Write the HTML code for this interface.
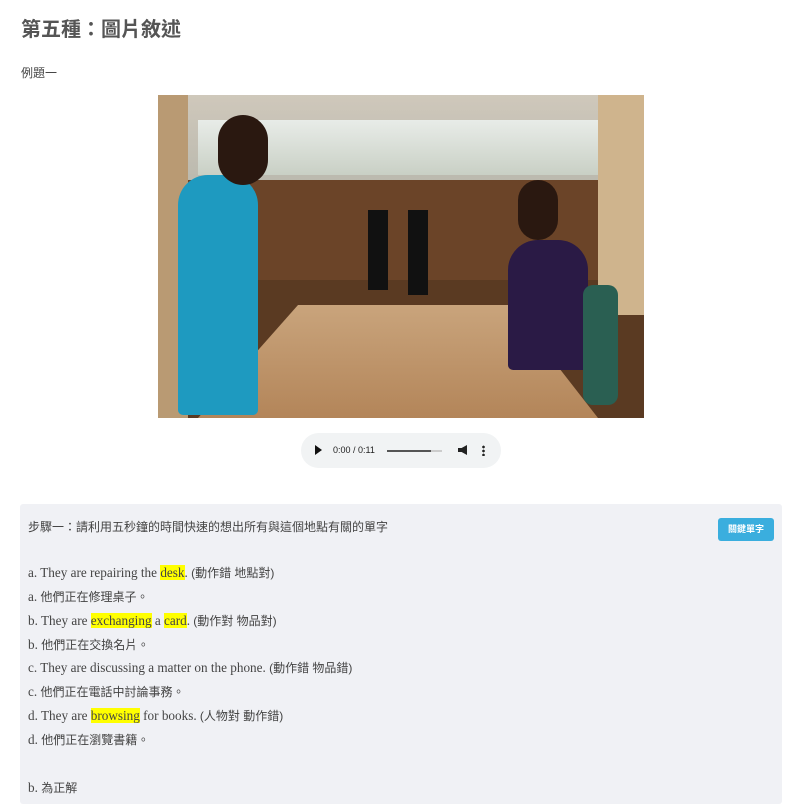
<!DOCTYPE html>
<html><head><meta charset="utf-8"><style>
body{margin:0;background:#fff;font-family:"Liberation Sans","Noto Sans CJK TC",sans-serif;color:#444;width:802px;height:797px;overflow:hidden;position:relative}
h1{position:absolute;left:21px;top:13px;margin:0;font-size:20px;font-weight:bold;color:#555}
.ex{position:absolute;left:21px;top:64px;font-size:12px}
.photo{position:absolute;left:158px;top:95px;width:486px;height:323px;overflow:hidden;background:#5a3a22}
.audio{position:absolute;left:301px;top:433px;width:200px;height:35px;border-radius:18px;background:#f1f3f4;font-size:9px;color:#222}
.box{position:absolute;left:20px;top:504px;width:762px;height:300px;background:#f0f1f5;border-radius:3px}
.l{position:absolute;left:8px;font-family:"Liberation Serif","Noto Sans CJK TC",serif;font-size:13.2px;color:#444;white-space:nowrap}
.cj{font-family:"Liberation Sans","Noto Sans CJK TC",sans-serif;font-size:12px}
.h{background:#ffff00}
.btn{position:absolute;left:698px;top:14px;width:56px;height:23px;background:#3aaede;border-radius:3px;color:#fff;font-size:9px;font-weight:bold;text-align:center;line-height:23px}
</style></head><body>
<h1>第五種：圖片敘述</h1>
<div class="ex">例題一</div>
<div class="photo">
<div style="position:absolute;left:0;top:0;width:486px;height:95px;background:linear-gradient(#cfc8bb,#b9b8ad)"></div>
<div style="position:absolute;left:40px;top:25px;width:400px;height:55px;background:linear-gradient(#e8ece8,#c9d0c5)"></div>
<div style="position:absolute;left:0;top:85px;width:486px;height:100px;background:#6b4428"></div>
<div style="position:absolute;left:0;top:0;width:30px;height:323px;background:#b99a73"></div>
<div style="position:absolute;left:440px;top:0;width:46px;height:220px;background:#cfb48d"></div>
<div style="position:absolute;left:40px;top:210px;width:400px;height:113px;background:linear-gradient(#c9a47c,#b38559);clip-path:polygon(25% 0,78% 0,100% 100%,0 100%)"></div>
<div style="position:absolute;left:20px;top:80px;width:80px;height:240px;background:#1e9ac0;border-radius:30px 30px 5px 5px"></div>
<div style="position:absolute;left:60px;top:20px;width:50px;height:70px;background:#2a1810;border-radius:25px"></div>
<div style="position:absolute;left:350px;top:145px;width:80px;height:130px;background:#2a1a45;border-radius:30px 30px 5px 5px"></div>
<div style="position:absolute;left:360px;top:85px;width:40px;height:60px;background:#2a1810;border-radius:20px"></div>
<div style="position:absolute;left:210px;top:115px;width:20px;height:80px;background:#111"></div>
<div style="position:absolute;left:250px;top:115px;width:20px;height:85px;background:#111"></div>
<div style="position:absolute;left:425px;top:190px;width:35px;height:120px;background:#2a5f52;border-radius:10px"></div>
</div>
<div class="audio">
<span style="position:absolute;left:14px;top:12px;width:0;height:0;border-left:7px solid #111;border-top:5px solid transparent;border-bottom:5px solid transparent"></span>
<span style="position:absolute;left:32px;top:12px">0:00 / 0:11</span>
<span style="position:absolute;left:86px;top:17px;width:55px;height:2px;background:#ccc"></span>
<span style="position:absolute;left:86px;top:17px;width:44px;height:2px;background:#555"></span>
<span style="position:absolute;left:157px;top:12px;width:9px;height:10px;background:#222;clip-path:polygon(0 30%,40% 30%,100% 0,100% 100%,40% 70%,0 70%)"></span>
<span style="position:absolute;left:181px;top:12px;width:3px;height:11px;background:radial-gradient(circle,#222 1.2px,transparent 1.5px) 0 0/3px 4px"></span>
</div>
<div class="box">
<div class="btn">關鍵單字</div>
<div class="l cj" style="top:14px">步驟一：請利用五秒鐘的時間快速的想出所有與這個地點有關的單字</div>
<div class="l" style="top:60px">a. They are repairing the <span class="h">desk</span>. <span class="cj">(動作錯 地點對)</span></div>
<div class="l" style="top:84px">a. <span class="cj">他們正在修理桌子。</span></div>
<div class="l" style="top:108px">b. They are <span class="h">exchanging</span> a <span class="h">card</span>. <span class="cj">(動作對 物品對)</span></div>
<div class="l" style="top:132px">b. <span class="cj">他們正在交換名片。</span></div>
<div class="l" style="top:155px">c. They are discussing a matter on the phone. <span class="cj">(動作錯 物品錯)</span></div>
<div class="l" style="top:179px">c. <span class="cj">他們正在電話中討論事務。</span></div>
<div class="l" style="top:203px">d. They are <span class="h">browsing</span> for books. <span class="cj">(人物對 動作錯)</span></div>
<div class="l" style="top:227px">d. <span class="cj">他們正在瀏覽書籍。</span></div>
<div class="l" style="top:275px">b. <span class="cj">為正解</span></div>
</div>
</body></html>
